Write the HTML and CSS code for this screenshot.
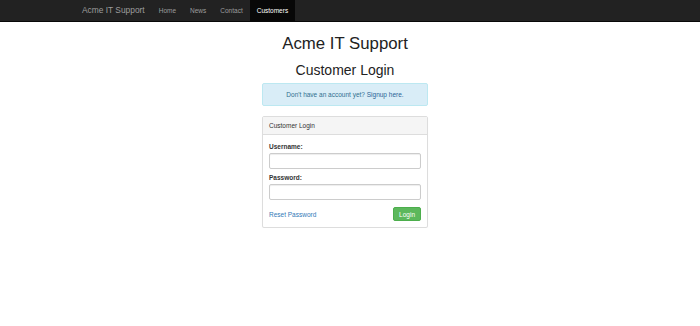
FILE: index.html
```html
<!DOCTYPE html>
<html lang="en">
<head>
    <meta charset="UTF-8">
    <meta name="viewport" content="width=device-width, initial-scale=1.0">
    <title>Customer Login</title>
    <link rel="stylesheet" href="styles.css">
</head>
<body>
    <nav class="navbar">
        <div class="nav-inner">
            <a href="#" class="brand">Acme IT Support</a>
            <a href="#" class="nav-link">Home</a>
            <a href="#" class="nav-link">News</a>
            <a href="#" class="nav-link">Contact</a>
            <a href="#" class="nav-link active">Customers</a>
        </div>
    </nav>

    <div class="column">
        <h1>Acme IT Support</h1>
        <h2>Customer Login</h2>

        <div class="alert">
            Don't have an account yet? <a href="#">Signup here.</a>
        </div>

        <div class="panel">
            <div class="panel-heading">Customer Login</div>
            <form class="panel-body">
                <div class="form-group">
                    <label for="username">Username:</label>
                    <input type="text" id="username">
                </div>
                <div class="form-group">
                    <label for="password">Password:</label>
                    <input type="password" id="password">
                </div>
                <div class="form-actions">
                    <a href="#" class="reset">Reset Password</a>
                    <button type="submit" class="btn">Login</button>
                </div>
            </form>
        </div>
    </div>
</body>
</html>
```

FILE: styles.css
```css
body {
    margin: 0;
    font-family: 'Liberation Sans', Arial, sans-serif;
    font-size: 6.5px;
    color: #333;
    background: #fff;
}
a {
    text-decoration: none;
}
.navbar {
    background: #222;
    border-bottom: 1px solid #080808;
    height: 21px;
}
.nav-inner {
    width: 536px;
    margin: 0 auto;
    display: flex;
    align-items: stretch;
    height: 21px;
}
.brand {
    color: #9d9d9d;
    font-size: 8.4px;
    line-height: 21px;
    padding-right: 7px;
}
.nav-link {
    color: #9d9d9d;
    font-size: 6.5px;
    line-height: 21px;
    padding: 0 7px;
}
.nav-link.active {
    background: #080808;
    color: #fff;
}
.column {
    width: 166px;
    margin-left: calc(50% - 88px);
    text-align: center;
}
h1 {
    font-size: 16.8px;
    font-weight: 500;
    line-height: 20px;
    margin: 12px 0 0;
    color: #222;
}
h2 {
    font-size: 14px;
    font-weight: 500;
    line-height: 17px;
    margin: 8px 0 0;
    color: #222;
}
.alert {
    margin-top: 4px;
    height: 21px;
    line-height: 21px;
    background: #d9edf7;
    border: 1px solid #bce8f1;
    border-radius: 2px;
    color: #31708f;
}
.alert a {
    color: #2a6496;
}
.panel {
    margin-top: 10px;
    border: 1px solid #ddd;
    border-radius: 2px;
    text-align: left;
    box-shadow: 0 1px 1px rgba(0, 0, 0, 0.05);
}
.panel-heading {
    background: #f5f5f5;
    border-bottom: 1px solid #ddd;
    height: 17px;
    line-height: 17px;
    padding: 0 6px;
}
.panel-body {
    padding: 7px 6px 6px;
}
.form-group {
    margin-bottom: 4px;
}
label {
    display: block;
    font-weight: bold;
    line-height: 9px;
    margin-bottom: 2px;
}
input {
    display: block;
    box-sizing: border-box;
    width: 100%;
    height: 16px;
    margin: 0;
    border: 1px solid #ccc;
    border-radius: 2px;
    box-shadow: inset 0 1px 1px rgba(0, 0, 0, 0.075);
}
.form-actions {
    margin-top: 7px;
    display: flex;
    justify-content: space-between;
    align-items: center;
}
.reset {
    color: #337ab7;
}
.btn {
    font-family: inherit;
    font-size: 6.5px;
    color: #fff;
    background: #5cb85c;
    border: 1px solid #4cae4c;
    border-radius: 2px;
    height: 14px;
    padding: 0 5px;
}
```
